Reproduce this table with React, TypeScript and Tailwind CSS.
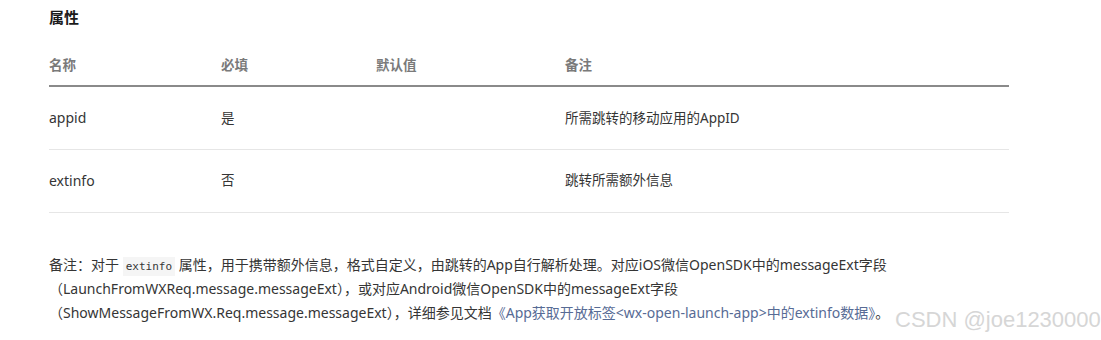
const rows = [
  { name: 'appid', required: '是', def: '', note: '所需跳转的移动应用的AppID' },
  { name: 'extinfo', required: '否', def: '', note: '跳转所需额外信息' },
];

const font = { fontFamily: '"Noto Sans", "Noto Sans CJK SC", sans-serif' };

export default function App() {
  return (
    <div className="w-[1101px] h-[340px] bg-white relative overflow-hidden text-[#353535]" style={font}>
      <div className="pl-[49px] w-[1009px]">
        <h3 className="pt-[6px] text-[15px] leading-[22px] font-bold text-[#1a1a1a]">属性</h3>

        <table className="mt-[14px] w-[960px] text-[13.5px] border-collapse">
          <thead>
            <tr className="border-b-2 border-[#8a8a8a] text-[#7a7a7a]">
              <th className="w-[172px] h-[44px] text-left font-semibold pt-[3px]">名称</th>
              <th className="w-[155px] text-left font-semibold pt-[3px]">必填</th>
              <th className="w-[189px] text-left font-semibold pt-[3px]">默认值</th>
              <th className="text-left font-semibold pt-[3px]">备注</th>
            </tr>
          </thead>
          <tbody>
            {rows.map((r) => (
              <tr key={r.name} className="border-b border-[#e6e6e6]">
                <td className="h-[63px] text-[14px]">{r.name}</td>
                <td>{r.required}</td>
                <td>{r.def}</td>
                <td>{r.note}</td>
              </tr>
            ))}
          </tbody>
        </table>

        <div className="mt-[40px] text-[14px] whitespace-nowrap">
          <div className="h-[24px] leading-[24px]">
            备注：对于{' '}
            <code className="bg-[#f5f5f5] px-[3px] py-[3px] text-[11px]" style={{ fontFamily: '"DejaVu Sans Mono", monospace' }}>
              extinfo
            </code>{' '}
            属性，用于携带额外信息，格式自定义，由跳转的App自行解析处理。对应iOS微信OpenSDK中的messageExt字段
          </div>
          <div className="h-[24px] leading-[24px]">
            （LaunchFromWXReq.message.messageExt），或对应Android微信OpenSDK中的messageExt字段
          </div>
          <div className="h-[24px] leading-[24px]">
            （ShowMessageFromWX.Req.message.messageExt），详细参见文档
            <span className="text-[#576b95]">《App获取开放标签&lt;wx-open-launch-app&gt;中的extinfo数据》</span>。
          </div>
        </div>
      </div>

      <div
        className="absolute left-[895px] top-[305px] text-[22px] leading-[30px] text-[#d6d6d6] whitespace-nowrap"
        style={{ fontFamily: '"Liberation Sans", sans-serif' }}
      >
        CSDN @joe1230000
      </div>
    </div>
  );
}
